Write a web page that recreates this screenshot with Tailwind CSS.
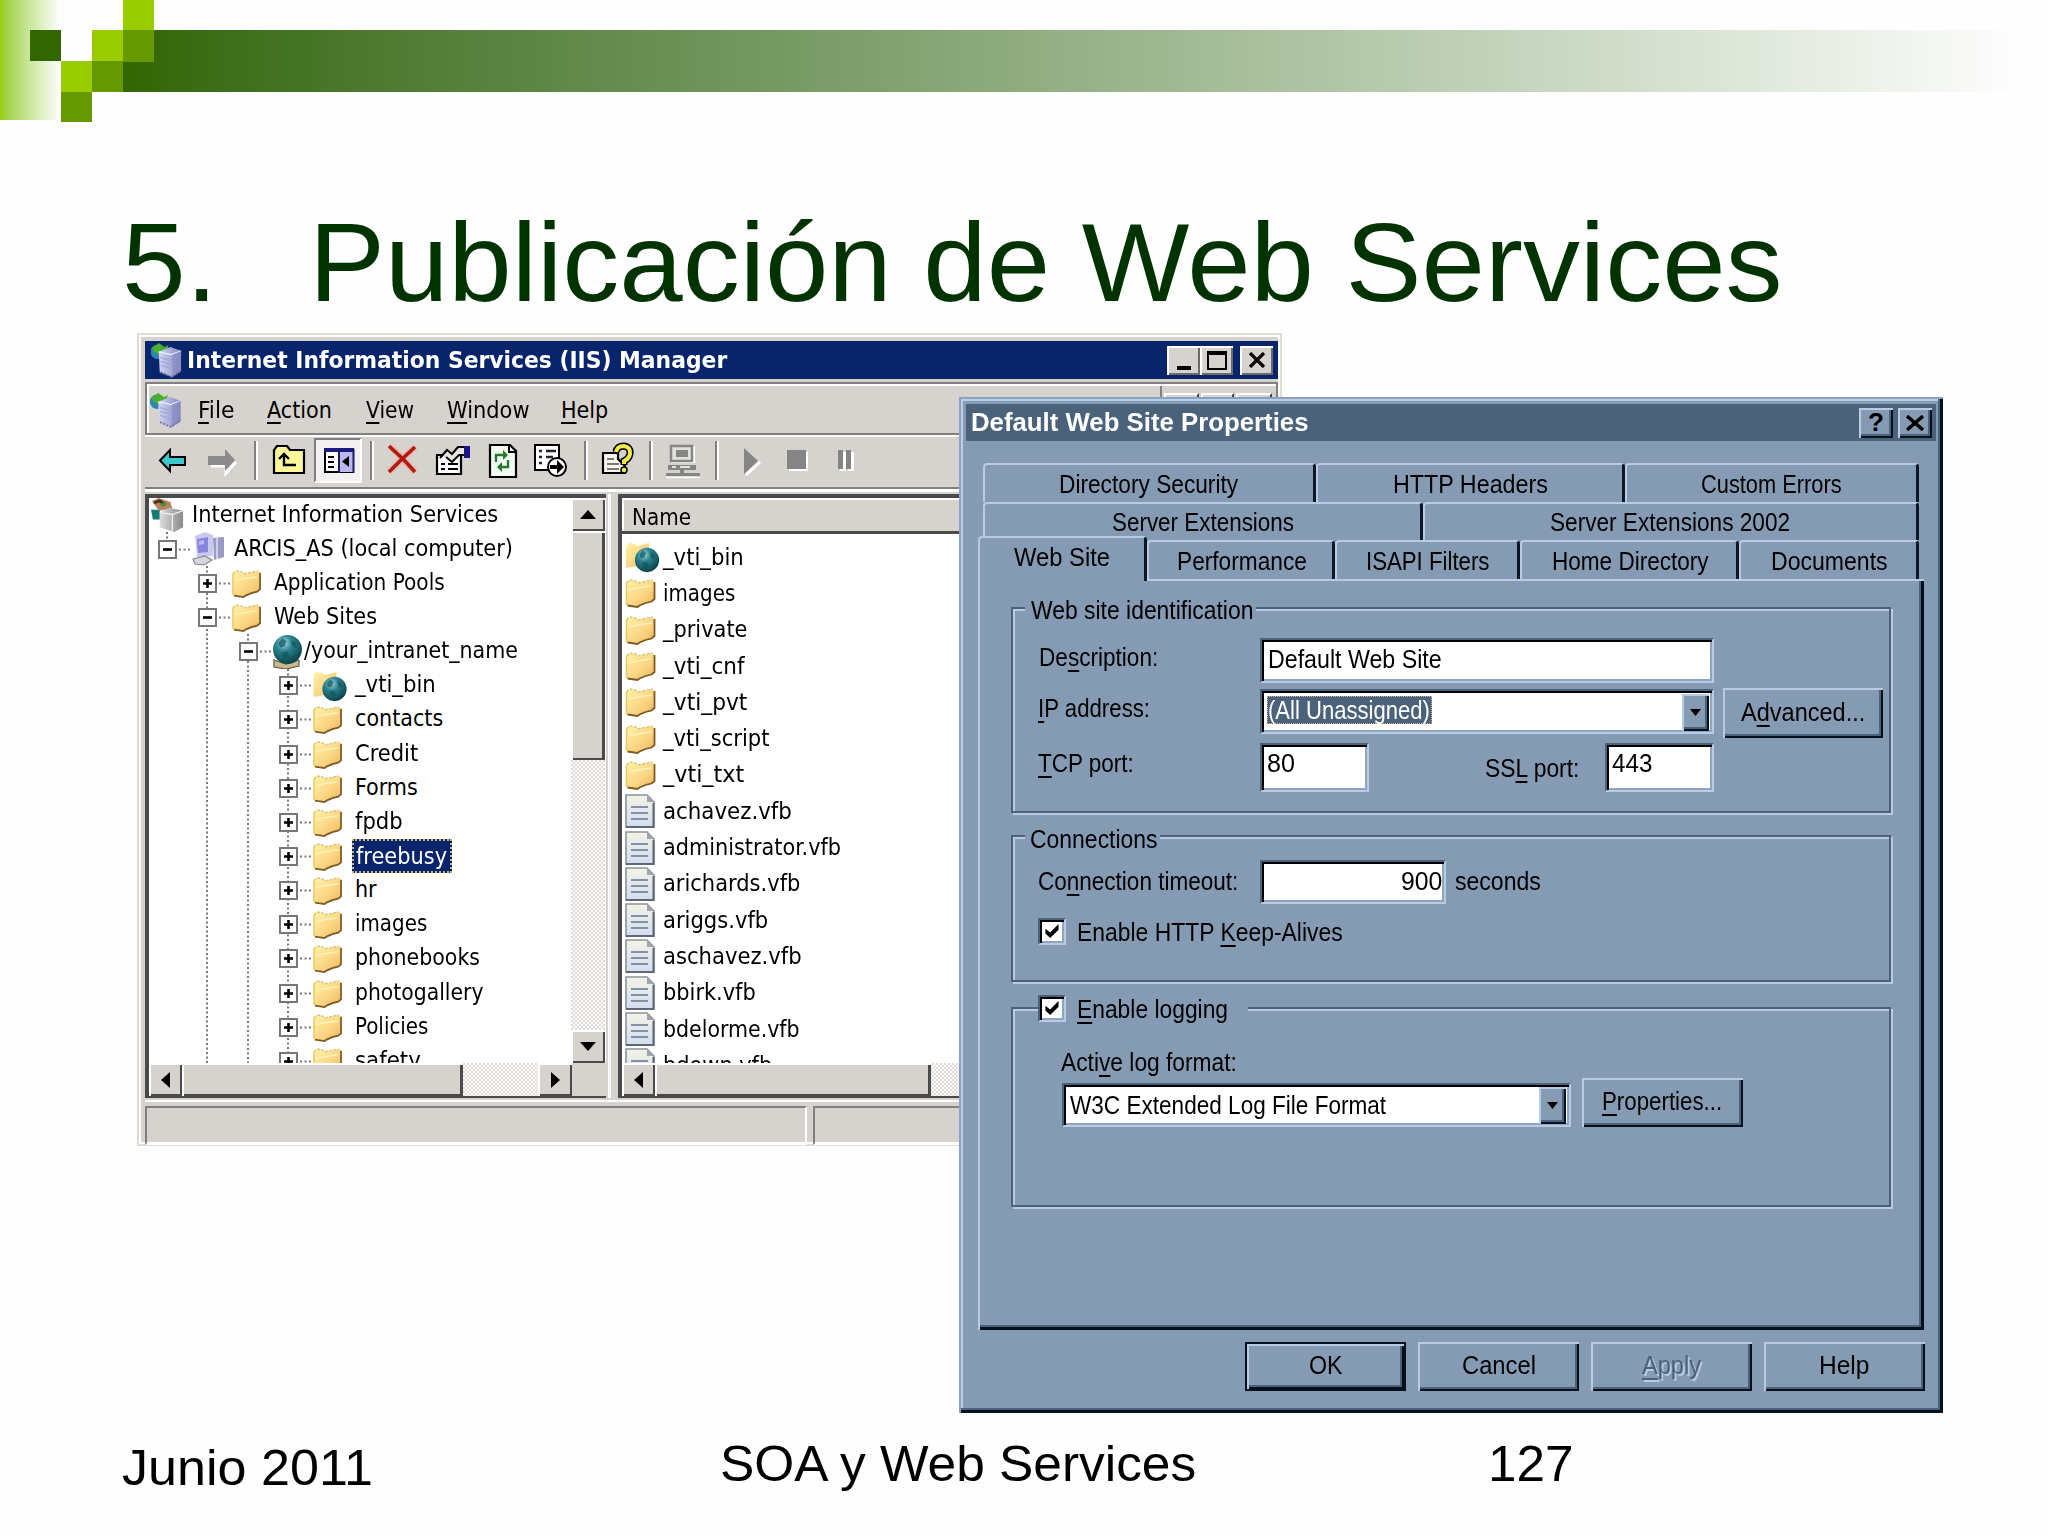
<!DOCTYPE html>
<html lang="es">
<head>
<meta charset="utf-8">
<title>Publicación de Web Services</title>
<script src="https://cdn.jsdelivr.net/npm/@tailwindcss/browser@4"></script>
</head>
<body class="relative w-[2048px] h-[1536px] overflow-hidden bg-[#fefefe] font-['Liberation_Sans',Arial,sans-serif] text-black">

<!-- shared icon symbols -->
<svg class="absolute w-0 h-0">
  <defs>
    <linearGradient id="gf" x1="0" y1="0" x2="1" y2="1"><stop offset="0" stop-color="#fff3a8"/><stop offset=".55" stop-color="#fbd684"/><stop offset="1" stop-color="#eeb45c"/></linearGradient>
    <radialGradient id="gg" cx=".38" cy=".28" r=".8"><stop offset="0" stop-color="#a9d8e4"/><stop offset=".35" stop-color="#2b8490"/><stop offset="1" stop-color="#06383f"/></radialGradient>
    <linearGradient id="gd" x1="0" y1="0" x2="0" y2="1"><stop offset="0" stop-color="#f3f4e4"/><stop offset="1" stop-color="#d4dcef"/></linearGradient>
    <linearGradient id="gs" x1="0" y1="0" x2="1" y2="0"><stop offset="0" stop-color="#d3d6f6"/><stop offset="1" stop-color="#8286bb"/></linearGradient>
    <linearGradient id="gs2" x1="0" y1="0" x2="1" y2="0"><stop offset="0" stop-color="#dcdcdc"/><stop offset="1" stop-color="#8a8a8a"/></linearGradient>
  </defs>
  <symbol id="folder" viewBox="0 0 30 30">
    <path d="M1 5 L4 2 L10 3 L12 5 L27 2 L29 4 V21 L27 23 L20 25 L14 27 L12 29 L1 27 Z" fill="url(#gf)"/>
    <path d="M1 5 L4 2 L10 3 L12 5 L27 2" fill="none" stroke="#d8c67a" stroke-width="1.5" stroke-dasharray="3 1.5"/>
    <path d="M1 5V27" stroke="#e8c860" stroke-width="1.5"/>
    <path d="M29 4V21L26 23.5L20 25L14 27.5L12 29L2 27.5" fill="none" stroke="#7c5a22" stroke-width="1.8"/>
    <path d="M3 12L12 10L26 8" fill="none" stroke="#fff2ba" stroke-width="1.5"/>
  </symbol>
  <symbol id="globe" viewBox="0 0 30 30">
    <circle cx="15" cy="15" r="14" fill="url(#gg)"/>
    <path d="M6 9 L10 4 L14 7 L12 12 L8 13 Z M18 6 L23 8 L24 14 L20 12 Z M9 18 L15 17 L17 23 L12 26 Z" fill="#14585c" opacity=".75"/>
  </symbol>
  <symbol id="site" viewBox="0 0 31 35">
    <path d="M2 26L14 30L27 26V32L14 35L2 33Z" fill="#c9b98c" stroke="#5d5a48" stroke-width="1.2"/>
    <use href="#globe" x="0" y="0" width="31" height="31"/>
  </symbol>
  <symbol id="webfolder" viewBox="0 0 34 34">
    <path d="M1 6 L4 3 L10 4 L12 6 L24 3 V24 L1 28 Z" fill="url(#gf)"/>
    <use href="#globe" x="9" y="7" width="26" height="26"/>
  </symbol>
  <symbol id="doc" viewBox="0 0 30 34">
    <path d="M1 1H22L29 8V33H1Z" fill="url(#gd)" stroke="#8b93a0" stroke-width="1.6"/>
    <path d="M28.5 9V33H1" fill="none" stroke="#5f6876" stroke-width="2"/>
    <path d="M22 1V8H29Z" fill="#9ea5ae"/>
    <path d="M6 13H23M6 19H23M6 25H23" stroke="#8390ab" stroke-width="2.2"/>
  </symbol>
  <symbol id="server" viewBox="0 0 32 36">
    <circle cx="7" cy="9" r="7.500" fill="#2e86b8"/><path d="M1 5L8 0L14 4L18 2L16 9L10 12L4 10Z" fill="#48b02c"/>
    <path d="M8 9L20 4L31 8V29L22 35L9 30Z" fill="url(#gs)"/>
    <path d="M8 9L21 12L31 8" fill="none" stroke="#eef0ff" stroke-width="1.3"/>
    <path d="M22 12V34L31 29V8Z" fill="#8a8dc4" opacity=".7"/>
    <path d="M10 30L21 35L30 29" fill="none" stroke="#6d70a0" stroke-width="1.8" stroke-dasharray="2 1.5"/>
    <path d="M10 15L20 18M10 19L20 22M10 23L20 26" stroke="#a3a7dc" stroke-width="1.4"/>
  </symbol>
  <symbol id="root" viewBox="0 0 34 36">
    <path d="M0 12H9V22H2Z" fill="#137a74"/><path d="M1 3L8 0L20 4L22 11L8 13Z" fill="#b98560"/><path d="M3 5L9 3L15 7" stroke="#4b3322" stroke-width="3" fill="none"/><path d="M10 8l5-3" stroke="#3a9a3a" stroke-width="3"/>
    <path d="M9 15L19 10L33 13V30L24 35L9 30Z" fill="url(#gs2)"/><path d="M9 15L22 17L33 13M22 17V34" stroke="#efefef" fill="none" stroke-width="1.4"/>
  </symbol>
  <symbol id="pc" viewBox="0 0 34 34">
    <path d="M22 6L33 5V25L23 28Z" fill="#9a9bc4"/><path d="M26 6V27" stroke="#cfd0e8" stroke-width="2"/>
    <path d="M4 4L14 0L22 3V24L6 25Z" fill="#c9c8ee"/><path d="M6 7L17 5V20L7 21Z" fill="#8885dc"/><path d="M8 9l5-1v4l-5 1z" fill="#b9b7f4"/>
    <path d="M2 27L14 24L21 28L13 33L4 32Z" fill="#d6d6de" stroke="#85858f" stroke-width="1.2"/>
  </symbol>
  <symbol id="check" viewBox="0 0 16 16"><path d="M1 5L6 9L15 0V6L6 15L1 10Z" fill="#000"/></symbol>
</svg>

<!-- header decoration -->
<header class="absolute left-0 top-0 w-[2048px] h-[124px]">
  <div class="absolute left-0 top-0 w-[61px] h-[120px] bg-linear-to-r from-[#99cc00] to-white"></div>
  <div class="absolute left-[123px] top-[30px] w-[1900px] h-[62px] bg-linear-to-r from-[#336600] to-[#fefefe]"></div>
  <div class="absolute left-[30px] top-[30px] w-[31px] h-[31px] bg-[#336600]"></div>
  <div class="absolute left-[123px] top-0 w-[31px] h-[30px] bg-[#99cc00]"></div>
  <div class="absolute left-[123px] top-[30px] w-[31px] h-[32px] bg-[#669900]"></div>
  <div class="absolute left-[92px] top-[30px] w-[31px] h-[31px] bg-[#99cc00]"></div>
  <div class="absolute left-[92px] top-[61px] w-[31px] h-[31px] bg-[#669900]"></div>
  <div class="absolute left-[61px] top-[61px] w-[31px] h-[31px] bg-[#99cc00]"></div>
  <div class="absolute left-[61px] top-[92px] w-[31px] h-[30px] bg-[#669900]"></div>
</header>

<h1 class="flex pt-[207px] pl-[122px] h-[330px] text-[112px] leading-[112px] text-[#003300] whitespace-nowrap">
  <span class="w-[187px]"><span class="inline-block origin-left" data-w="95">5.</span></span>
  <span><span class="inline-block origin-left" data-w="1473">Publicación de Web Services</span></span>
</h1>

<!-- IIS manager window -->
<section class="absolute left-[137px] top-[333px] w-[1145px] h-[813px] border-2 border-[#dfdcd6] bg-[#d6d3ce] shadow-[inset_2px_2px_0_#fff,inset_-2px_-2px_0_#fff] pt-[6px] pl-[6px] pr-[2px] whitespace-nowrap font-['DejaVu_Sans_Condensed','DejaVu_Sans',sans-serif] text-[23px] leading-[23px]">
  <div class="flex items-center h-[38px] bg-[#08246b] text-white font-bold pl-[6px] pr-[5px]">
    <svg class="w-[31px] h-[35px] mr-[5px]"><use href="#server"/></svg>
    <span class="inline-block origin-left" data-w="540">Internet Information Services (IIS) Manager</span>
    <div class="ml-auto flex text-black">
      <div class="w-[33px] h-[29px] bg-[#d6d3ce] shadow-[inset_2px_2px_0_#fff,inset_-2px_-2px_0_#6b6b6b] flex items-end justify-center pb-[5px]"><div class="w-[14px] h-[4px] bg-black"></div></div>
      <div class="w-[33px] h-[29px] bg-[#d6d3ce] shadow-[inset_2px_2px_0_#fff,inset_-2px_-2px_0_#6b6b6b] flex items-center justify-center"><div class="w-[20px] h-[19px] border-2 border-t-4 border-black"></div></div>
      <div class="ml-[7px] w-[33px] h-[29px] bg-[#d6d3ce] shadow-[inset_2px_2px_0_#fff,inset_-2px_-2px_0_#6b6b6b] flex items-center justify-center"><svg class="w-[18px] h-[16px]" viewBox="0 0 18 16"><path d="M2 1L16 15M16 1L2 15" stroke="#000" stroke-width="3.2"/></svg></div>
    </div>
  </div>

  <div class="mt-[3px] flex h-[53px] border-t-2 border-l-2 border-[#808080] border-b-2 border-r-2 shadow-[inset_2px_2px_0_#fff] pl-[3px]">
    <svg class="mt-[9px] w-[32px] h-[35px]"><use href="#server"/></svg>
    <div class="flex pt-[15px] [&_u]:underline-offset-4 [&_u]:[text-decoration-skip-ink:none]">
      <span class="ml-[16px] w-[69px]"><span class="inline-block origin-left" data-w="36"><u>F</u>ile</span></span>
      <span class="w-[99px]"><span class="inline-block origin-left" data-w="65"><u>A</u>ction</span></span>
      <span class="w-[81px]"><span class="inline-block origin-left" data-w="48"><u>V</u>iew</span></span>
      <span class="w-[114px]"><span class="inline-block origin-left" data-w="83"><u>W</u>indow</span></span>
      <span><span class="inline-block origin-left" data-w="47"><u>H</u>elp</span></span>
    </div>
    <div class="ml-auto mt-[2px] mr-[4px] flex items-start border-l-2 border-[#808080] pl-[2px] pt-[7px] gap-[2px]">
      <div class="w-[35px] h-5 border-2 border-white border-r-[#404040]"></div><div class="w-[33px] h-5 border-2 border-white border-r-[#404040]"></div><div class="w-[36px] h-5 border-2 border-white border-r-[#404040]"></div>
    </div>
  </div>

  <!-- toolbar -->
  <div class="relative h-[54px] border-t-2 border-white border-b-[2px] border-b-[#808080]">
    <svg class="block w-[820px] h-[50px]" viewBox="145 437 820 50" fill="none">
      <g stroke="#808080" stroke-width="2"><path d="M255 441V480M371 441V480M585 441V480M650 441V480M716 441V480"/></g>
      <g stroke="#fff" stroke-width="2"><path d="M257 441V480M373 441V480M587 441V480M652 441V480M718 441V480"/></g>
      <path d="M160 460.500L170 450V457H185V465H170V471Z" fill="#3fc6cc" stroke="#000" stroke-width="2"/>
      <path d="M236 462L226 473V466H211" stroke="#fff" stroke-width="3"/>
      <path d="M235 460L225 449V456H208V465H225V471Z" fill="#8b8b8b"/>
      <path d="M274 473V450L277 446H287L290 450H304V473Z" fill="#fbf69a" stroke="#000" stroke-width="2.200"/>
      <path d="M284 456V465H296M279 459L284 454L289 459" stroke="#000" stroke-width="2.400"/>
      <path d="M314 438H361V482H314Z" fill="#f2f0f0"/><path d="M315 482V439H361" stroke="#808080" stroke-width="2"/><path d="M315 482H361V439" stroke="#fff" stroke-width="2"/>
      <path d="M325 449H353V472H325Z" fill="#fff" stroke="#000" stroke-width="2"/><path d="M340 450H353V472H340Z" fill="#b9b9ee"/><path d="M324 450H354" stroke="#1a1a80" stroke-width="4"/><path d="M339 451V473M353.500 449V473" stroke="#1a1a60" stroke-width="2"/><path d="M328 457H334M328 462H334M328 467H334" stroke="#000" stroke-width="2"/><path d="M349 456V467L342 461.500Z" fill="#000"/>
      <path d="M390 446L415 472M415 447L389 472" stroke="#f5a9a0" stroke-width="7" opacity=".6"/><path d="M389 446L404 460L415 472M415 447L400 461L389 472" stroke="#b01a12" stroke-width="3.600"/>
      <path d="M437 455H461V474H437Z" fill="#fff" stroke="#000" stroke-width="2.200"/><path d="M441 464H445M448 464H458M441 469H445M448 469H458" stroke="#000" stroke-width="2"/><path d="M440 458L447 450L452 454L458 447H465V455H459L452 462L446 457" fill="#e9e6df" stroke="#000" stroke-width="2"/><path d="M464 446H470V458H464Z" fill="#16168a"/>
      <path d="M490 445H510L516 451V477H490Z" fill="#f2fbf0" stroke="#000" stroke-width="2.200"/><path d="M509 445V452H516" stroke="#000" stroke-width="2"/><path d="M496 462V455H504M508 460V467H500" stroke="#267a35" stroke-width="2.400"/><path d="M503 450L508 455L503 460ZM502 462L497 467L502 472Z" fill="#267a35"/>
      <path d="M535 445H559V470H535Z" fill="#fff" stroke="#000" stroke-width="2"/><path d="M539 451H542M546 451H556M539 457H542M546 457H553M539 463H542" stroke="#223" stroke-width="2.400"/><circle cx="557" cy="467" r="9" fill="#fff" stroke="#000" stroke-width="2"/><path d="M550 467H558" stroke="#000" stroke-width="4"/><path d="M557 460L564 467L557 474Z" fill="#000"/>
      <path d="M603 453H618V459L625 466V473H603Z" fill="#f8f4ea" stroke="#000" stroke-width="2.200"/><path d="M607 459H614M607 464H619M607 469H619" stroke="#777" stroke-width="1.800"/>
      <path d="M616 452Q617 446 624 446Q631 447 630 454Q629 459 624 461V465" stroke="#000" stroke-width="7"/><path d="M616 452Q617 446 624 446Q631 447 630 454Q629 459 624 461V464" stroke="#f4e84a" stroke-width="4"/><circle cx="624" cy="470" r="3" fill="#f4e84a" stroke="#000" stroke-width="1.500"/>
      <path d="M672 447H694V462H672Z" stroke="#fff" stroke-width="2"/><path d="M671 446H692V461H671Z" fill="#e2e0dc" stroke="#858585" stroke-width="2.500"/><path d="M676 450H688V457H676Z" fill="#858585"/><path d="M668 465H696V470H668ZM680 470H684V474H680ZM666 473H700V476H666Z" fill="#858585"/><path d="M672 467H676M680 467H690M666 477.500H700" stroke="#fff" stroke-width="1.500"/>
      <path d="M746 475L760 462" stroke="#fff" stroke-width="3"/><path d="M744 448L758 461L744 474Z" fill="#858585"/>
      <path d="M789 452H808V471H789Z" fill="#fff"/><path d="M787 450H806V469H787Z" fill="#858585"/>
      <path d="M840 452H846V471H840ZM848 452H854V471H848Z" fill="#fff"/><path d="M838 450H843V469H838ZM846 450H851V469H846Z" fill="#858585"/>
    </svg>
  </div>
  <div class="h-[3px] bg-white"></div>

  <div class="mt-[2px] flex h-[604px]">
    <!-- tree panel -->
    <div class="w-[461px] h-full border-t-[4px] border-l-[4px] border-[#4a4a4a] border-b-[2px] border-b-[#4a4a4a] bg-white">
      <div class="flex h-[565px]">
        <div id="tree" class="relative w-[422px] overflow-hidden">
          <svg class="absolute left-0 top-0 w-[423px] h-[566px]" viewBox="150 497 423 566"><g stroke="#777" stroke-width="2" stroke-dasharray="2 2.500"><path d="M168 531V541M208 565V1063M249 633V1063M289 668V1063"/></g></svg>
        </div>
        <div class="flex flex-col w-[34px] bg-[repeating-conic-gradient(#dedbd9_0_25%,#fbfbfb_0_50%)] bg-[length:4px_4px]">
          <div class="h-[33px] bg-[#d6d3ce] shadow-[inset_2px_2px_0_#fff,inset_-2px_-2px_0_#4a4a4a] flex items-center justify-center"><svg class="w-[16px] h-[9px]" viewBox="0 0 16 9"><path d="M8 0L16 9H0Z"/></svg></div>
          <div class="h-[229px] bg-[#d6d3ce] shadow-[inset_2px_2px_0_#fff,inset_-3px_-2px_0_#4a4a4a]"></div>
          <div class="mt-auto h-[33px] bg-[#d6d3ce] shadow-[inset_2px_2px_0_#fff,inset_-2px_-2px_0_#4a4a4a] flex items-center justify-center"><svg class="w-[16px] h-[9px]" viewBox="0 0 16 9"><path d="M8 9L0 0H16Z"/></svg></div>
        </div>
      </div>
      <div class="flex h-[33px] bg-[repeating-conic-gradient(#dedbd9_0_25%,#fbfbfb_0_50%)] bg-[length:4px_4px]">
        <div class="w-[33px] bg-[#d6d3ce] shadow-[inset_2px_2px_0_#fff,inset_-2px_-2px_0_#4a4a4a] flex items-center justify-center"><svg class="w-[9px] h-[16px]" viewBox="0 0 9 16"><path d="M0 8L9 0V16Z"/></svg></div>
        <div class="w-[281px] bg-[#d6d3ce] shadow-[inset_2px_2px_0_#fff,inset_-3px_-2px_0_#4a4a4a]"></div>
        <div class="ml-auto w-[34px] bg-[#d6d3ce] shadow-[inset_2px_2px_0_#fff,inset_-2px_-2px_0_#4a4a4a] flex items-center justify-center"><svg class="w-[9px] h-[16px]" viewBox="0 0 9 16"><path d="M9 8L0 0V16Z"/></svg></div>
        <div class="w-[34px] bg-[#d6d3ce]"></div>
      </div>
    </div>
    <div class="w-[3px] ml-[2px] bg-white"></div>
    <!-- list panel -->
    <div class="ml-[7px] w-[660px] h-full border-t-[4px] border-l-[4px] border-[#4a4a4a] border-b-[2px] border-b-[#4a4a4a] bg-white">
      <div class="h-[36px] bg-[#d6d3ce] border-b-[3px] border-[#4a4a4a] shadow-[inset_2px_2px_0_#fff] pt-[8px] pl-[10px]"><span class="inline-block origin-left" data-w="59">Name</span></div>
      <div id="list" class="h-[529px] overflow-hidden pt-[5px]"></div>
      <div class="flex h-[33px] bg-[repeating-conic-gradient(#dedbd9_0_25%,#fbfbfb_0_50%)] bg-[length:4px_4px]">
        <div class="w-[33px] bg-[#d6d3ce] shadow-[inset_2px_2px_0_#fff,inset_-2px_-2px_0_#4a4a4a] flex items-center justify-center"><svg class="w-[9px] h-[16px]" viewBox="0 0 9 16"><path d="M0 8L9 0V16Z"/></svg></div>
        <div class="w-[276px] bg-[#d6d3ce] shadow-[inset_2px_2px_0_#fff,inset_-3px_-2px_0_#4a4a4a]"></div>
      </div>
    </div>
  </div>
  <div class="mt-[2px] h-[2px] bg-white"></div>
  <div class="mt-[4px] flex h-[39px] gap-[6px]">
    <div class="w-[662px] border-2 border-[#808080] border-r-white border-b-white"></div>
    <div class="flex-1 border-2 border-[#808080] border-r-white border-b-white"></div>
  </div>
</section>

<!-- properties dialog -->
<section class="absolute left-[959px] top-[397px] w-[984px] h-[1016px] bg-[#859bb4] shadow-[inset_2px_2px_0_#8ba1bd,inset_-3px_-3px_0_#04101c,inset_-5px_-5px_0_#4a627b,inset_4px_4px_0_#bccde8] pt-[7px] pl-[7px] pr-[7px] whitespace-nowrap text-[26px] leading-[26px] font-['Liberation_Sans_Narrow','Liberation_Sans',sans-serif] [&_u]:underline-offset-4 [&_u]:[text-decoration-skip-ink:none]">
  <div class="flex h-[37px] bg-[#4a637b] pl-[5px] pr-[4px] pt-[5px] text-white font-bold">
    <span class="inline-block origin-left" data-w="338">Default Web Site Properties</span>
    <div class="ml-auto -mt-px flex gap-[5px] text-black">
      <div class="w-[34px] h-[30px] bg-[#859bb4] shadow-[inset_2px_2px_0_#b9cbe4,inset_-2px_-2px_0_#04101c,inset_-4px_-4px_0_#4a627b] text-center font-['Liberation_Sans',sans-serif] leading-[29px]">?</div>
      <div class="w-[34px] h-[30px] bg-[#859bb4] shadow-[inset_2px_2px_0_#b9cbe4,inset_-2px_-2px_0_#04101c,inset_-4px_-4px_0_#4a627b] flex items-center justify-center"><svg class="w-[18px] h-[16px]" viewBox="0 0 18 16"><path d="M1 1L17 15M17 1L1 15" stroke="#000" stroke-width="3.400"/></svg></div>
    </div>
  </div>

  <!-- tabs -->
  <div class="mt-[22px] ml-[17px] flex h-[39px] *:border-t-2 *:border-l-2 *:border-[#b9cbe4] *:border-r-[3px] *:border-r-[#0a1826] *:rounded-t-[4px] *:pt-[6px] *:flex *:justify-center">
    <div class="w-[333px]"><span class="inline-block origin-left" data-w="179">Directory Security</span></div>
    <div class="w-[309px]"><span class="inline-block origin-left" data-w="155">HTTP Headers</span></div>
    <div class="w-[294px]"><span class="inline-block origin-left" data-w="141">Custom Errors</span></div>
  </div>
  <div class="ml-[17px] flex h-[38px] *:border-t-2 *:border-l-2 *:border-[#b9cbe4] *:border-r-[3px] *:border-r-[#0a1826] *:rounded-t-[4px] *:pt-[5px] *:flex *:justify-center">
    <div class="w-[440px]"><span class="inline-block origin-left" data-w="182">Server Extensions</span></div>
    <div class="w-[496px]"><span class="inline-block origin-left" data-w="240">Server Extensions 2002</span></div>
  </div>
  <div class="-mt-[4px] ml-[12px] flex h-[43px]">
    <div class="relative z-10 w-[169px] h-[45px] bg-[#859bb4] border-t-2 border-l-2 border-[#b9cbe4] border-r-[3px] border-r-[#0a1826] rounded-t-[4px] pt-[6px] flex justify-center"><span class="inline-block origin-left" data-w="96">Web Site</span></div>
    <div class="mt-[4px] flex *:border-t-2 *:border-l-2 *:border-[#b9cbe4] *:border-r-[3px] *:border-r-[#0a1826] *:rounded-t-[4px] *:pt-[6px] *:pl-[2px] *:flex *:justify-center">
      <div class="w-[188px]"><span class="inline-block origin-left" data-w="130">Performance</span></div>
      <div class="w-[185px]"><span class="inline-block origin-left" data-w="123">ISAPI Filters</span></div>
      <div class="w-[219px]"><span class="inline-block origin-left" data-w="157">Home Directory</span></div>
      <div class="w-[180px]"><span class="inline-block origin-left" data-w="117">Documents</span></div>
    </div>
  </div>

  <!-- tab page -->
  <div class="ml-[12px] w-[946px] h-[751px] shadow-[inset_2px_2px_0_#b9cbe4,inset_-3px_-3px_0_#04101c,inset_-5px_-5px_0_#4a627b] pl-[33px] pt-[28px]">
    <div class="w-[880px] h-[206px] border-2 border-[#4a627b] shadow-[inset_2px_2px_0_#b9cbe4,2px_2px_0_#b9cbe4]">
      <div class="relative -mt-[12px] ml-[12px] w-[231px] bg-[#859bb4] pl-[6px]"><span class="inline-block origin-left" data-w="222">Web site identification</span></div>
      <div class="mt-[15px] ml-[25px] flex h-[45px]">
        <div class="w-[222px] pt-[6px] pl-px"><span class="inline-block origin-left" data-w="119">De<u>s</u>cription:</span></div>
        <div class="w-[454px] bg-white border-2 border-[#4a627b] border-r-[#b9cbe4] border-b-[#b9cbe4] shadow-[inset_2px_2px_0_#000,inset_-2px_-2px_0_#8ea4bf] pl-[6px] pt-[6px]"><span class="inline-block origin-left" data-w="174">Default Web Site</span></div>
      </div>
      <div class="mt-[6px] ml-[25px] flex h-[45px]">
        <div class="w-[222px] pt-[6px]"><span class="inline-block origin-left" data-w="112"><u>I</u>P address:</span></div>
        <div class="w-[454px] bg-white border-2 border-[#4a627b] border-r-[#b9cbe4] border-b-[#b9cbe4] shadow-[inset_2px_2px_0_#000,inset_-2px_-2px_0_#8ea4bf] flex justify-between pl-[5px] pt-[3px] pr-[3px]">
          <div class="mt-[2px] h-[28px] w-[165px] bg-[#4a637b] text-white border border-dotted border-[#d5b48c]"><span class="inline-block origin-left" data-w="162">(All Unassigned)</span></div>
          <div class="w-[27px] h-[37px] bg-[#859bb4] shadow-[inset_2px_2px_0_#b9cbe4,inset_-2px_-2px_0_#04101c,inset_-4px_-4px_0_#4a627b] flex items-center justify-center"><svg class="w-[11px] h-[7px]" viewBox="0 0 11 7"><path d="M0 0H11L5.500 7Z"/></svg></div>
        </div>
        <div class="ml-[9px] -mt-px w-[160px] h-[50px] shadow-[inset_2px_2px_0_#b9cbe4,inset_-2px_-2px_0_#04101c,inset_-4px_-4px_0_#4a627b] pt-[11px] flex justify-center"><span class="inline-block origin-left" data-w="124">A<u>d</u>vanced...</span></div>
      </div>
      <div class="mt-[9px] ml-[25px] flex h-[49px]">
        <div class="w-[222px] pt-[7px]"><span class="inline-block origin-left" data-w="96"><u>T</u>CP port:</span></div>
        <div class="w-[109px] bg-white border-2 border-[#4a627b] border-r-[#b9cbe4] border-b-[#b9cbe4] shadow-[inset_2px_2px_0_#000,inset_-2px_-2px_0_#8ea4bf] pl-[5px] pt-[5px]"><span class="inline-block origin-left" data-w="28">80</span></div>
        <div class="ml-[116px] w-[120px] pt-[12px]"><span class="inline-block origin-left" data-w="94">SS<u>L</u> port:</span></div>
        <div class="w-[109px] bg-white border-2 border-[#4a627b] border-r-[#b9cbe4] border-b-[#b9cbe4] shadow-[inset_2px_2px_0_#000,inset_-2px_-2px_0_#8ea4bf] pl-[5px] pt-[5px]"><span class="inline-block origin-left" data-w="40">443</span></div>
      </div>
    </div>

    <div class="mt-[22px] w-[880px] h-[147px] border-2 border-[#4a627b] shadow-[inset_2px_2px_0_#b9cbe4,2px_2px_0_#b9cbe4]">
      <div class="relative -mt-[11px] ml-[12px] w-[135px] bg-[#859bb4] pl-[5px]"><span class="inline-block origin-left" data-w="128">Connections</span></div>
      <div class="mt-[8px] ml-[25px] flex h-[44px]">
        <div class="w-[222px] pt-[8px]"><span class="inline-block origin-left" data-w="200">Co<u>n</u>nection timeout:</span></div>
        <div class="w-[186px] bg-white border-2 border-[#4a627b] border-r-[#b9cbe4] border-b-[#b9cbe4] shadow-[inset_2px_2px_0_#000,inset_-2px_-2px_0_#8ea4bf] flex justify-end pr-[2px] pt-[6px]"><span class="inline-block origin-left" data-w="41">900</span></div>
        <div class="ml-[9px] pt-[8px]"><span class="inline-block origin-left" data-w="86">seconds</span></div>
      </div>
      <div class="mt-[14px] ml-[25px] flex h-[27px]">
        <div class="shrink-0 w-[28px] h-[27px] bg-white border-2 border-[#4a627b] border-r-[#b9cbe4] border-b-[#b9cbe4] shadow-[inset_2px_2px_0_#000,inset_-2px_-2px_0_#8ea4bf] flex items-center justify-center"><svg class="w-[16px] h-[15px]"><use href="#check"/></svg></div>
        <div class="ml-[11px] pt-px"><span class="inline-block origin-left" data-w="266">Enable HTTP <u>K</u>eep-Alives</span></div>
      </div>
    </div>

    <div class="mt-[25px] w-[880px] h-[200px] border-2 border-[#4a627b] shadow-[inset_2px_2px_0_#b9cbe4,2px_2px_0_#b9cbe4]">
      <div class="relative -mt-[14px] ml-[25px] flex h-[27px] w-[210px] bg-[#859bb4]">
        <div class="shrink-0 w-[28px] h-[27px] bg-white border-2 border-[#4a627b] border-r-[#b9cbe4] border-b-[#b9cbe4] shadow-[inset_2px_2px_0_#000,inset_-2px_-2px_0_#8ea4bf] flex items-center justify-center"><svg class="w-[16px] h-[15px]"><use href="#check"/></svg></div>
        <div class="ml-[11px] pt-[1px]"><span class="inline-block origin-left" data-w="151"><u>E</u>nable logging</span></div>
      </div>
      <div class="mt-[27px] ml-[48px] h-[26px]"><span class="inline-block origin-left" data-w="176">Acti<u>v</u>e log format:</span></div>
      <div class="mt-[8px] ml-[49px] flex h-[44px]">
        <div class="w-[509px] bg-white border-2 border-[#4a627b] border-r-[#b9cbe4] border-b-[#b9cbe4] shadow-[inset_2px_2px_0_#000,inset_-2px_-2px_0_#8ea4bf] flex justify-between pl-[6px] pt-[2px] pr-[3px]">
          <div class="pt-[5px]"><span class="inline-block origin-left" data-w="316">W3C Extended Log File Format</span></div>
          <div class="w-[27px] h-[37px] bg-[#859bb4] shadow-[inset_2px_2px_0_#b9cbe4,inset_-2px_-2px_0_#04101c,inset_-4px_-4px_0_#4a627b] flex items-center justify-center"><svg class="w-[11px] h-[7px]" viewBox="0 0 11 7"><path d="M0 0H11L5.500 7Z"/></svg></div>
        </div>
        <div class="ml-[11px] -mt-[5px] w-[161px] h-[49px] shadow-[inset_2px_2px_0_#b9cbe4,inset_-2px_-2px_0_#04101c,inset_-4px_-4px_0_#4a627b] pt-[10px] flex justify-center"><span class="inline-block origin-left" data-w="120"><u>P</u>roperties...</span></div>
      </div>
    </div>
  </div>

  <div class="mt-[12px] ml-[279px] flex gap-[12px]">
    <div class="w-[161px] h-[49px] border-2 border-[#04101c] shadow-[inset_2px_2px_0_#b9cbe4,inset_-2px_-2px_0_#04101c,inset_-4px_-4px_0_#4a627b] pt-[8px] flex justify-center"><span class="inline-block origin-left" data-w="34">OK</span></div>
    <div class="w-[161px] h-[49px] shadow-[inset_2px_2px_0_#b9cbe4,inset_-2px_-2px_0_#04101c,inset_-4px_-4px_0_#4a627b] pt-[10px] flex justify-center"><span class="inline-block origin-left" data-w="74">Cancel</span></div>
    <div class="w-[161px] h-[49px] shadow-[inset_2px_2px_0_#b9cbe4,inset_-2px_-2px_0_#04101c,inset_-4px_-4px_0_#4a627b] pt-[10px] flex justify-center text-[#4a637b] text-shadow-[2px_2px_0_#b9cbe4]"><span class="inline-block origin-left" data-w="59"><u>A</u>pply</span></div>
    <div class="w-[161px] h-[49px] shadow-[inset_2px_2px_0_#b9cbe4,inset_-2px_-2px_0_#04101c,inset_-4px_-4px_0_#4a627b] pt-[10px] flex justify-center"><span class="inline-block origin-left" data-w="50">Help</span></div>
  </div>
</section>

<footer class="absolute left-0 top-[1439px] flex items-start w-[2048px] text-[50px] leading-[50px] whitespace-nowrap">
  <span class="pl-[122px] mt-[4px] w-[720px]"><span class="inline-block origin-left" data-w="251">Junio 2011</span></span>
  <span class="w-[768px]"><span class="inline-block origin-left" data-w="476">SOA y Web Services</span></span>
  <span><span class="inline-block origin-left" data-w="85">127</span></span>
</footer>

<script>
  // [icon, indent level, icon size, gap to text, toggle, label, label width]
  const tree = [
    ['root', 0, 'w-[33px] h-[35px]', 'ml-[8px]', '', 'Internet Information Services', 306],
    ['pc', 1, 'w-[34px] h-[34px]', 'ml-[9px]', '-', 'ARCIS_AS (local computer)', 279],
    ['folder', 2, 'w-[31px] h-[29px]', 'ml-[12px]', '+', 'Application Pools', 171],
    ['folder', 2, 'w-[31px] h-[29px]', 'ml-[12px]', '-', 'Web Sites', 103],
    ['site', 3, 'w-[31px] h-[35px]', 'ml-px', '-', '/your_intranet_name', 214],
    ['webfolder', 4, 'w-[35px] h-[34px]', 'ml-[8px]', '+', '_vti_bin', 81],
    ['folder', 4, 'w-[31px] h-[29px]', 'ml-[12px]', '+', 'contacts', 88],
    ['folder', 4, 'w-[31px] h-[29px]', 'ml-[12px]', '+', 'Credit', 63],
    ['folder', 4, 'w-[31px] h-[29px]', 'ml-[12px]', '+', 'Forms', 63],
    ['folder', 4, 'w-[31px] h-[29px]', 'ml-[12px]', '+', 'fpdb', 48],
    ['folder', 4, 'w-[31px] h-[29px]', 'ml-[12px]', '+', 'freebusy', 91],
    ['folder', 4, 'w-[31px] h-[29px]', 'ml-[12px]', '+', 'hr', 22],
    ['folder', 4, 'w-[31px] h-[29px]', 'ml-[12px]', '+', 'images', 72],
    ['folder', 4, 'w-[31px] h-[29px]', 'ml-[12px]', '+', 'phonebooks', 125],
    ['folder', 4, 'w-[31px] h-[29px]', 'ml-[12px]', '+', 'photogallery', 128],
    ['folder', 4, 'w-[31px] h-[29px]', 'ml-[12px]', '+', 'Policies', 73],
    ['folder', 4, 'w-[31px] h-[29px]', 'ml-[12px]', '+', 'safety', 66],
  ];
  const pad = ['pl-[2px]', 'pl-[9px]', 'pl-[49px]', 'pl-[90px]', 'pl-[130px]'];
  document.getElementById('tree').insertAdjacentHTML('beforeend', tree.map(([icon, lvl, size, gap, tog, label, w]) => `
    <div class="relative flex items-center h-[34.15px] ${pad[lvl]}">
      ${tog ? `<svg class="shrink-0 w-[33px] h-[19px]" viewBox="0 0 33 19"><rect x="1" y="1" width="17" height="17" fill="#fff" stroke="#777" stroke-width="2"/><path d="M5 9.5H14${tog === '+' ? 'M9.5 5V14' : ''}" stroke="#000" stroke-width="2.6"/><path d="M21 9.500H33" stroke="#777" stroke-width="2" stroke-dasharray="2 2.500"/></svg>` : ''}
      <svg class="shrink-0 ${size}"><use href="#${icon}"/></svg>
      ${label === 'freebusy'
        ? `<span class="ml-[9px] h-[34px] pl-[2px] pr-[3px] pt-[4px] bg-[#08246b] text-white border-2 border-dotted border-[#c8b878]"><span class="inline-block origin-left" data-w="${w}">${label}</span></span>`
        : `<span class="${gap} -mt-[2px]"><span class="inline-block origin-left" data-w="${w}">${label}</span></span>`}
    </div>`).join(''));

  const list = [['webfolder', '_vti_bin', 81], ['folder', 'images', 72], ['folder', '_private', 85], ['folder', '_vti_cnf', 82],
    ['folder', '_vti_pvt', 84], ['folder', '_vti_script', 106], ['folder', '_vti_txt', 81], ['doc', 'achavez.vfb', 129],
    ['doc', 'administrator.vfb', 178], ['doc', 'arichards.vfb', 137], ['doc', 'ariggs.vfb', 105], ['doc', 'aschavez.vfb', 139],
    ['doc', 'bbirk.vfb', 93], ['doc', 'bdelorme.vfb', 137], ['doc', 'bdown.vfb', 109]];
  const listSize = { webfolder: 'w-[34px] h-[34px] mr-[4px]', folder: 'w-[31px] h-[30px] mr-[7px]', doc: 'w-[30px] h-[34px] mr-[8px]' };
  document.getElementById('list').innerHTML = list.map(([icon, label, w]) => `
    <div class="flex items-center h-[36.3px] pl-[3px]">
      <svg class="shrink-0 ${listSize[icon]}"><use href="#${icon}"/></svg>
      <span><span class="inline-block origin-left" data-w="${w}">${label}</span></span>
    </div>`).join('');

  const fit = el => {
    const natural = el.offsetWidth, w = +el.dataset.w;
    if (!natural) return;
    el.style.transform = `scaleX(${w / natural})`;
    el.style.marginRight = `${w - natural}px`;
  };
  const watcher = new ResizeObserver(entries => entries.forEach(e => fit(e.target)));
  const fitAll = () => document.querySelectorAll('[data-w]').forEach(fit);
  document.querySelectorAll('[data-w]').forEach(el => watcher.observe(el));
  addEventListener('load', fitAll);
</script>
</body>
</html>
